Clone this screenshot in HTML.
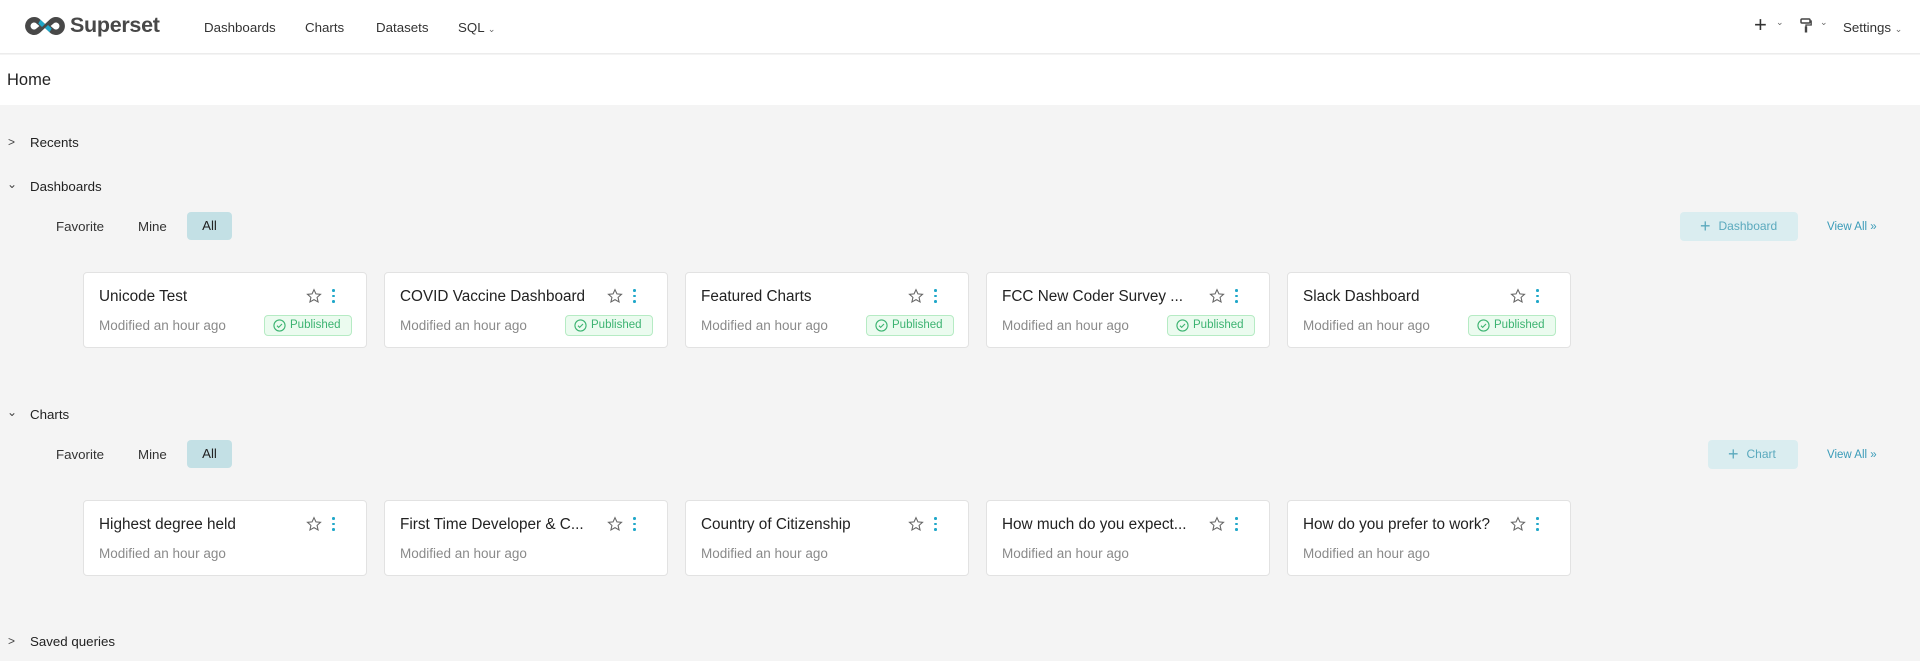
<!DOCTYPE html>
<html><head><meta charset="utf-8"><style>
*{box-sizing:border-box;margin:0;padding:0}
body{width:1920px;height:661px;overflow:hidden;background:#f4f4f4;font-family:"Liberation Sans",Arial,sans-serif;color:#1f1f1f;position:relative}
.a{position:absolute;white-space:nowrap}
#hdr{position:absolute;left:0;top:0;width:1920px;height:54px;background:#fff;border-bottom:1px solid #ececec}
#sub{position:absolute;left:0;top:55px;width:1920px;height:50px;background:#fff}
.nav{font-size:13.3px;color:#333;top:20px}
.sec{font-size:13.3px;color:#222}
.tab{font-size:13.3px;color:#333}
.allb{position:absolute;width:45px;height:28px;background:#c3e0e5;border-radius:4px;font-size:13.3px;color:#222;text-align:center;line-height:28px}
.card{position:absolute;width:284px;height:76px;background:#fff;border:1px solid #e2e2e2;border-radius:4px}
.card .t{position:absolute;left:15px;top:15px;font-size:15.3px;color:#222;white-space:nowrap}
.card .m{position:absolute;left:15px;top:45px;font-size:13.5px;color:#8a8a8a;white-space:nowrap}
.card .st{position:absolute;left:222px;top:15px}
.card .dt{position:absolute;left:248px;top:16px;width:3px}
.dt i{display:block;width:2.5px;height:2.5px;border-radius:50%;background:#20a7c9;margin-bottom:3px}
.badge{position:absolute;left:180px;top:42px;width:88px;height:21px;background:#ebfbef;border:1px solid #b6ebc4;border-radius:4px;font-size:11.5px;color:#3cb371;line-height:19px;padding-left:25px}
.badge svg{position:absolute;left:8px;top:3px}
.btn{position:absolute;height:29px;background:#daedf0;border-radius:4px;font-size:12px;color:#5aa9bd;line-height:29px}
.va{font-size:11.5px;color:#3a9bb8}
</style></head><body>
<div id="hdr"></div>
<div id="sub"></div>
<svg class="a" style="left:23px;top:15px" width="44" height="22" viewBox="0 0 44 22">
<path d="M11 2a9 9 0 1 0 6.5 15.3L22 13l4.5 4.3A9 9 0 1 0 26.5 4.7L22 9l-4.5-4.3A9 9 0 0 0 11 2zm0 5.5a3.5 3.5 0 0 1 2.6 1.1L16.4 11l-2.8 2.4A3.5 3.5 0 1 1 11 7.5zm22 0a3.5 3.5 0 1 1-2.6 5.9L27.6 11l2.8-2.4A3.5 3.5 0 0 1 33 7.5z" fill="#484848"/>
<path d="M17.5 4.7 22 9l-3 3-3.7-3.5z M26.5 17.3 22 13l3-3 3.7 3.5z" fill="#20a7c9"/>
</svg>
<div class="a" style="left:70px;top:13px;font-size:21.5px;font-weight:bold;color:#484848;letter-spacing:-0.3px">Superset</div>
<div class="a nav" style="left:204px">Dashboards</div>
<div class="a nav" style="left:305px">Charts</div>
<div class="a nav" style="left:376px">Datasets</div>
<div class="a nav" style="left:458px">SQL <span style="font-size:9px;color:#666">&#8964;</span></div>
<div class="a" style="left:1754px;top:12px;font-size:22px;color:#333;font-weight:300">+</div>
<div class="a" style="left:1776px;top:17px;font-size:9px;color:#666">&#8964;</div>
<svg class="a" style="left:1800px;top:18px" width="12" height="16" viewBox="0 0 12 16"><rect x="1" y="1" width="9" height="4" rx="1" fill="none" stroke="#444" stroke-width="1.5"/><path d="M10 3h1.2v4H6v2" fill="none" stroke="#444" stroke-width="1.3"/><rect x="4.8" y="8.5" width="2.4" height="6" fill="#444"/></svg>
<div class="a" style="left:1820px;top:17px;font-size:9px;color:#666">&#8964;</div>
<div class="a nav" style="left:1843px">Settings <span style="font-size:9px;color:#666">&#8964;</span></div>
<div class="a" style="left:7px;top:71px;font-size:16.5px;color:#222">Home</div>

<div class="a sec" style="left:8px;top:135px;font-size:12px;color:#444">&gt;</div>
<div class="a sec" style="left:30px;top:135px">Recents</div>
<div class="a sec" style="left:7px;top:177px;font-size:12px;color:#444">&#8964;</div>
<div class="a sec" style="left:30px;top:179px">Dashboards</div>
<div class="a tab" style="left:56px;top:219px">Favorite</div>
<div class="a tab" style="left:138px;top:219px">Mine</div>
<div class="allb" style="left:187px;top:212px">All</div>
<div class="btn" style="left:1680px;top:212px;width:118px;padding-left:20px"><span style="font-size:18px;vertical-align:-2px;margin-right:8px">+</span>Dashboard</div>
<div class="a va" style="left:1827px;top:221px">View All »</div>

<div class="card" style="left:83px;top:272px"><div class="t">Unicode Test</div><div class="m">Modified an hour ago</div><svg class="st" width="16" height="16" viewBox="0 0 24 24"><path d="M12 2.5l2.9 6.3 6.9.7-5.2 4.6 1.5 6.8L12 17.4l-6.1 3.5 1.5-6.8-5.2-4.6 6.9-.7z" fill="none" stroke="#666" stroke-width="1.6"/></svg><div class="dt"><i></i><i></i><i></i></div><div class="badge"><svg width="13" height="13" viewBox="0 0 14 14"><circle cx="7" cy="7" r="6" fill="none" stroke="#3cb371" stroke-width="1.2"/><path d="M4.3 7.2l1.8 1.8 3.6-3.6" fill="none" stroke="#3cb371" stroke-width="1.2"/></svg>Published</div></div>
<div class="card" style="left:384px;top:272px"><div class="t">COVID Vaccine Dashboard</div><div class="m">Modified an hour ago</div><svg class="st" width="16" height="16" viewBox="0 0 24 24"><path d="M12 2.5l2.9 6.3 6.9.7-5.2 4.6 1.5 6.8L12 17.4l-6.1 3.5 1.5-6.8-5.2-4.6 6.9-.7z" fill="none" stroke="#666" stroke-width="1.6"/></svg><div class="dt"><i></i><i></i><i></i></div><div class="badge"><svg width="13" height="13" viewBox="0 0 14 14"><circle cx="7" cy="7" r="6" fill="none" stroke="#3cb371" stroke-width="1.2"/><path d="M4.3 7.2l1.8 1.8 3.6-3.6" fill="none" stroke="#3cb371" stroke-width="1.2"/></svg>Published</div></div>
<div class="card" style="left:685px;top:272px"><div class="t">Featured Charts</div><div class="m">Modified an hour ago</div><svg class="st" width="16" height="16" viewBox="0 0 24 24"><path d="M12 2.5l2.9 6.3 6.9.7-5.2 4.6 1.5 6.8L12 17.4l-6.1 3.5 1.5-6.8-5.2-4.6 6.9-.7z" fill="none" stroke="#666" stroke-width="1.6"/></svg><div class="dt"><i></i><i></i><i></i></div><div class="badge"><svg width="13" height="13" viewBox="0 0 14 14"><circle cx="7" cy="7" r="6" fill="none" stroke="#3cb371" stroke-width="1.2"/><path d="M4.3 7.2l1.8 1.8 3.6-3.6" fill="none" stroke="#3cb371" stroke-width="1.2"/></svg>Published</div></div>
<div class="card" style="left:986px;top:272px"><div class="t">FCC New Coder Survey ...</div><div class="m">Modified an hour ago</div><svg class="st" width="16" height="16" viewBox="0 0 24 24"><path d="M12 2.5l2.9 6.3 6.9.7-5.2 4.6 1.5 6.8L12 17.4l-6.1 3.5 1.5-6.8-5.2-4.6 6.9-.7z" fill="none" stroke="#666" stroke-width="1.6"/></svg><div class="dt"><i></i><i></i><i></i></div><div class="badge"><svg width="13" height="13" viewBox="0 0 14 14"><circle cx="7" cy="7" r="6" fill="none" stroke="#3cb371" stroke-width="1.2"/><path d="M4.3 7.2l1.8 1.8 3.6-3.6" fill="none" stroke="#3cb371" stroke-width="1.2"/></svg>Published</div></div>
<div class="card" style="left:1287px;top:272px"><div class="t">Slack Dashboard</div><div class="m">Modified an hour ago</div><svg class="st" width="16" height="16" viewBox="0 0 24 24"><path d="M12 2.5l2.9 6.3 6.9.7-5.2 4.6 1.5 6.8L12 17.4l-6.1 3.5 1.5-6.8-5.2-4.6 6.9-.7z" fill="none" stroke="#666" stroke-width="1.6"/></svg><div class="dt"><i></i><i></i><i></i></div><div class="badge"><svg width="13" height="13" viewBox="0 0 14 14"><circle cx="7" cy="7" r="6" fill="none" stroke="#3cb371" stroke-width="1.2"/><path d="M4.3 7.2l1.8 1.8 3.6-3.6" fill="none" stroke="#3cb371" stroke-width="1.2"/></svg>Published</div></div>

<div class="a sec" style="left:7px;top:405px;font-size:12px;color:#444">&#8964;</div>
<div class="a sec" style="left:30px;top:407px">Charts</div>
<div class="a tab" style="left:56px;top:447px">Favorite</div>
<div class="a tab" style="left:138px;top:447px">Mine</div>
<div class="allb" style="left:187px;top:440px">All</div>
<div class="btn" style="left:1708px;top:440px;width:90px;padding-left:20px"><span style="font-size:18px;vertical-align:-2px;margin-right:8px">+</span>Chart</div>
<div class="a va" style="left:1827px;top:449px">View All »</div>

<div class="card" style="left:83px;top:500px"><div class="t">Highest degree held</div><div class="m">Modified an hour ago</div><svg class="st" width="16" height="16" viewBox="0 0 24 24"><path d="M12 2.5l2.9 6.3 6.9.7-5.2 4.6 1.5 6.8L12 17.4l-6.1 3.5 1.5-6.8-5.2-4.6 6.9-.7z" fill="none" stroke="#666" stroke-width="1.6"/></svg><div class="dt"><i></i><i></i><i></i></div></div>
<div class="card" style="left:384px;top:500px"><div class="t">First Time Developer &amp; C...</div><div class="m">Modified an hour ago</div><svg class="st" width="16" height="16" viewBox="0 0 24 24"><path d="M12 2.5l2.9 6.3 6.9.7-5.2 4.6 1.5 6.8L12 17.4l-6.1 3.5 1.5-6.8-5.2-4.6 6.9-.7z" fill="none" stroke="#666" stroke-width="1.6"/></svg><div class="dt"><i></i><i></i><i></i></div></div>
<div class="card" style="left:685px;top:500px"><div class="t">Country of Citizenship</div><div class="m">Modified an hour ago</div><svg class="st" width="16" height="16" viewBox="0 0 24 24"><path d="M12 2.5l2.9 6.3 6.9.7-5.2 4.6 1.5 6.8L12 17.4l-6.1 3.5 1.5-6.8-5.2-4.6 6.9-.7z" fill="none" stroke="#666" stroke-width="1.6"/></svg><div class="dt"><i></i><i></i><i></i></div></div>
<div class="card" style="left:986px;top:500px"><div class="t">How much do you expect...</div><div class="m">Modified an hour ago</div><svg class="st" width="16" height="16" viewBox="0 0 24 24"><path d="M12 2.5l2.9 6.3 6.9.7-5.2 4.6 1.5 6.8L12 17.4l-6.1 3.5 1.5-6.8-5.2-4.6 6.9-.7z" fill="none" stroke="#666" stroke-width="1.6"/></svg><div class="dt"><i></i><i></i><i></i></div></div>
<div class="card" style="left:1287px;top:500px"><div class="t">How do you prefer to work?</div><div class="m">Modified an hour ago</div><svg class="st" width="16" height="16" viewBox="0 0 24 24"><path d="M12 2.5l2.9 6.3 6.9.7-5.2 4.6 1.5 6.8L12 17.4l-6.1 3.5 1.5-6.8-5.2-4.6 6.9-.7z" fill="none" stroke="#666" stroke-width="1.6"/></svg><div class="dt"><i></i><i></i><i></i></div></div>

<div class="a sec" style="left:8px;top:634px;font-size:12px;color:#444">&gt;</div>
<div class="a sec" style="left:30px;top:634px">Saved queries</div>
</body></html>
